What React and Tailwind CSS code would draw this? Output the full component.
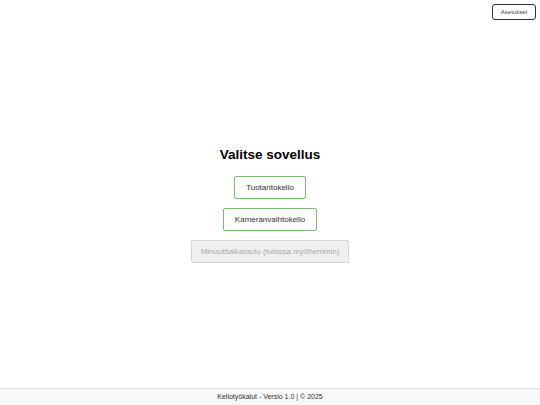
import React from 'react';

const apps = [
  { id: 'production', label: 'Tuotantokello' },
  { id: 'camera', label: 'Kameranvaihtokello' },
];

export default function App() {
  return (
    <div className="relative flex h-[405px] w-full flex-col bg-white text-[#111] font-['Liberation_Sans',Arial,sans-serif]">
      {/* Settings button */}
      <button className="absolute right-[4px] top-[4px] h-[16px] w-[44px] rounded-[3px] border border-[#333] bg-white text-[6px] text-[#444]">
        Asetukset
      </button>

      <main className="flex flex-1 flex-col items-center justify-center pt-[22px]">
        <h1 className="mb-[13px] text-[13.5px] font-bold leading-[16px] text-black">Valitse sovellus</h1>
        <div className="flex flex-col items-center gap-[9px]">
          {apps.map((app) => (
            <button
              key={app.id}
              className="h-[23px] rounded-[2px] border border-[#7cb87a] bg-white px-[11px] text-[8px] text-[#333]"
            >
              {app.label}
            </button>
          ))}
          <button
            disabled
            className="h-[23px] w-[158px] rounded-[2px] border border-[#d4d4d4] bg-[#efefef] text-[8px] text-[#aaa]"
          >
            Minuuttiaikataulu (tulossa myöhemmin)
          </button>
        </div>
      </main>

      <footer className="flex h-[17px] items-center justify-center border-t border-[#e0e0e0] bg-[#f8f8f8] text-[7px] text-[#333]">
        Kellotyökalut - Versio 1.0 | © 2025
      </footer>
    </div>
  );
}
